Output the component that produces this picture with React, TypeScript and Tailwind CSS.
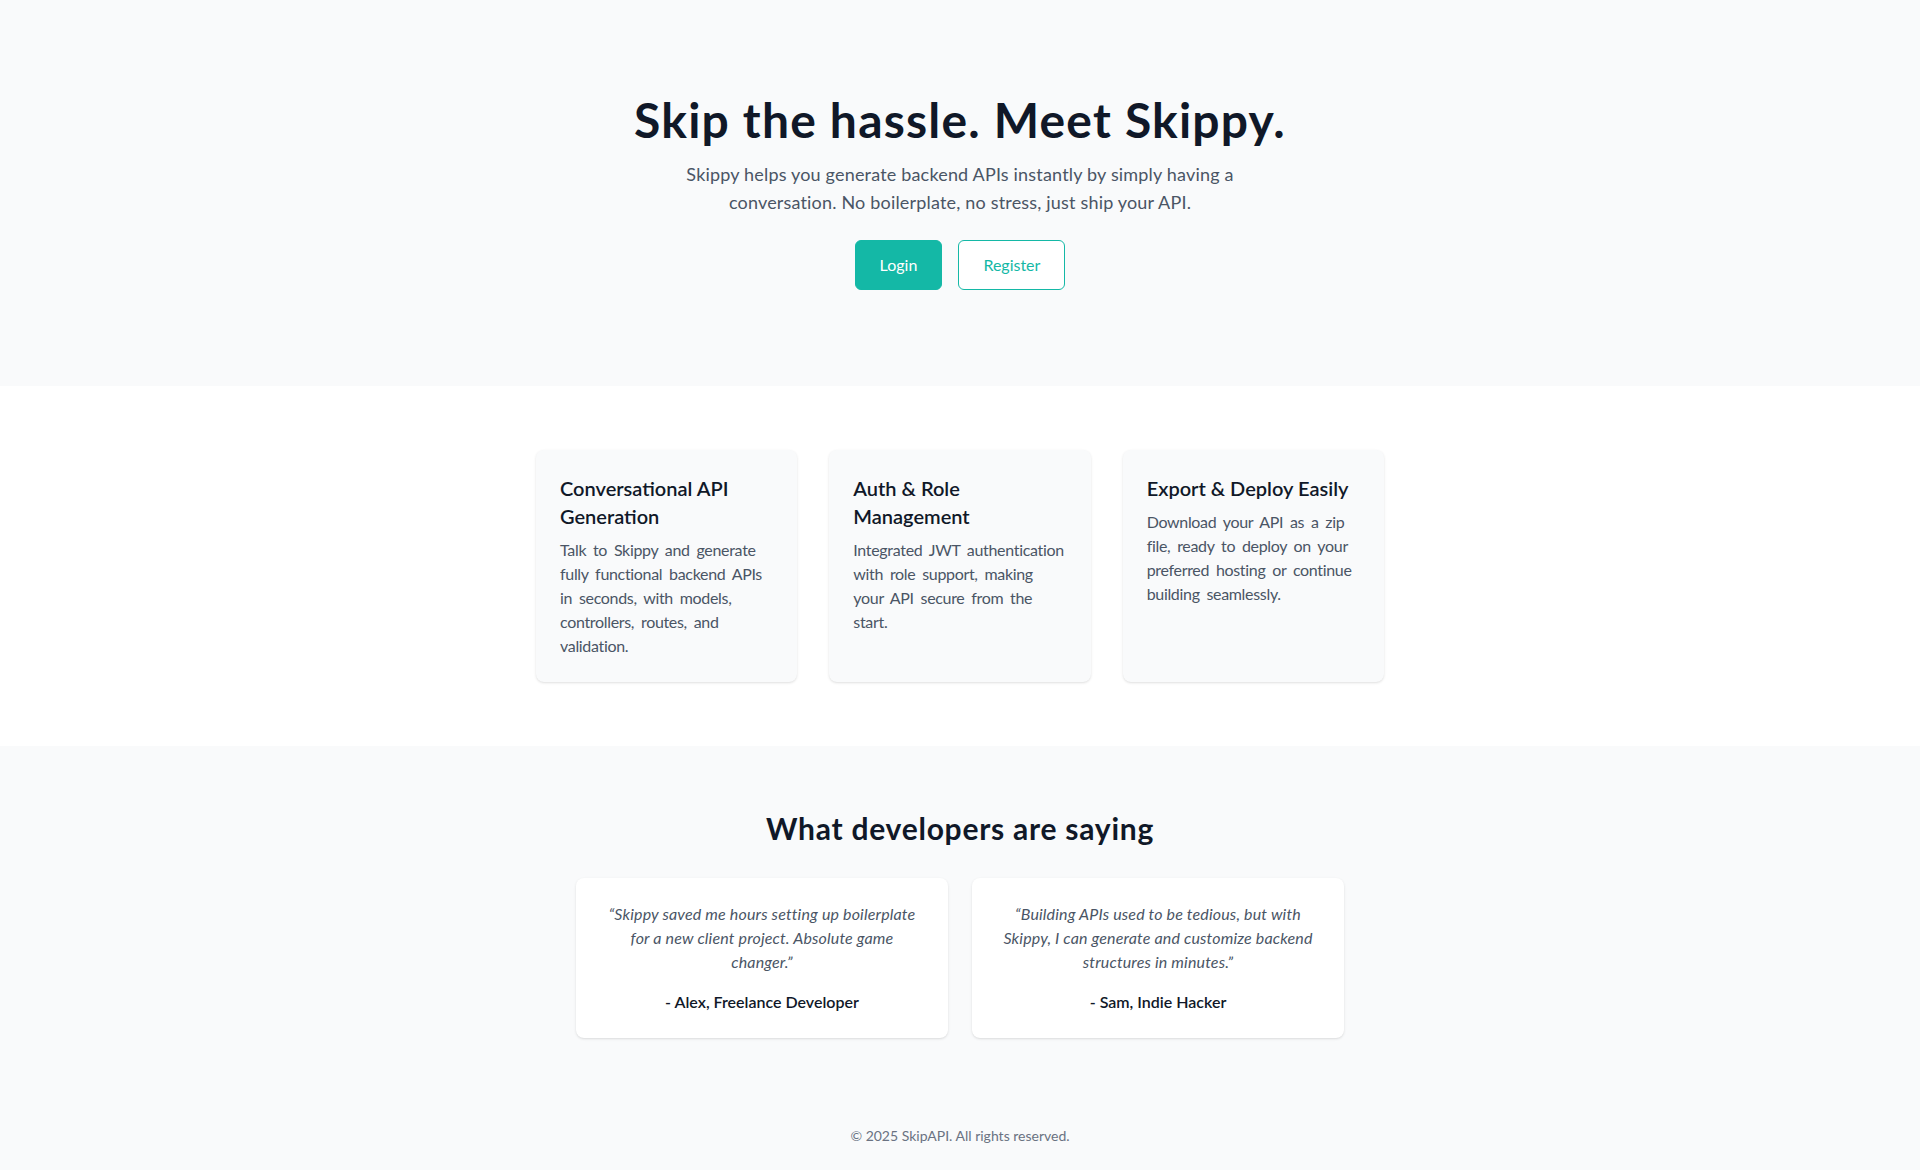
const FEATURES = [
  {
    title: 'Conversational API Generation',
    body: 'Talk to Skippy and generate fully functional backend APIs in seconds, with models, controllers, routes, and validation.',
  },
  {
    title: 'Auth & Role Management',
    body: 'Integrated JWT authentication with role support, making your API secure from the start.',
  },
  {
    title: 'Export & Deploy Easily',
    body: 'Download your API as a zip file, ready to deploy on your preferred hosting or continue building seamlessly.',
  },
];

const TESTIMONIALS = [
  {
    quote: '“Skippy saved me hours setting up boilerplate for a new client project. Absolute game changer.”',
    author: '- Alex, Freelance Developer',
  },
  {
    quote: '“Building APIs used to be tedious, but with Skippy, I can generate and customize backend structures in minutes.”',
    author: '- Sam, Indie Hacker',
  },
];

export default function App() {
  return (
    <div className="min-h-screen bg-gray-50 font-['Segoe_UI','Lato',sans-serif] text-gray-900">
      <section className="bg-gray-50 px-6 py-24 text-center">
        <h1 className="text-5xl font-bold leading-none tracking-wide text-gray-900">Skip the hassle. Meet Skippy.</h1>
        <p className="mx-auto mt-4 max-w-xl text-lg tracking-[0.01em] text-gray-600">
          Skippy helps you generate backend APIs instantly by simply having a conversation. No boilerplate, no
          stress, just ship your API.
        </p>
        <div className="mt-6 flex justify-center gap-4">
          <a
            href="#"
            className="rounded-md border border-[#14b8a6] bg-[#14b8a6] px-6 py-3 text-base text-white transition-colors hover:bg-teal-600"
          >
            Login
          </a>
          <a
            href="#"
            className="rounded-md border border-[#14b8a6] bg-white px-6 py-3 text-base text-[#14b8a6] transition-colors hover:bg-teal-50"
          >
            Register
          </a>
        </div>
      </section>

      <section className="bg-white py-16">
        <div className="mx-auto grid max-w-4xl grid-cols-3 gap-8 px-6">
          {FEATURES.map((f) => (
            <div key={f.title} className="rounded-lg bg-gray-50 p-6 shadow-sm">
              <h3 className="mb-2 text-xl font-semibold text-gray-900">{f.title}</h3>
              <p className="text-base tracking-[-0.02em] text-gray-600 [word-spacing:3px]">{f.body}</p>
            </div>
          ))}
        </div>
      </section>

      <section className="bg-gray-50 py-16">
        <h2 className="mb-8 text-center text-3xl font-bold tracking-wide text-gray-900">What developers are saying</h2>
        <div className="mx-auto grid max-w-3xl grid-cols-2 gap-6">
          {TESTIMONIALS.map((t) => (
            <div key={t.author} className="rounded-lg bg-white p-6 text-center shadow-sm">
              <p className="italic tracking-[0.01em] text-gray-600">{t.quote}</p>
              <p className="mt-4 font-semibold text-gray-900">{t.author}</p>
            </div>
          ))}
        </div>
      </section>

      <footer className="bg-gray-50 py-6 text-center text-sm text-gray-500">
        &copy; 2025 SkipAPI. All rights reserved.
      </footer>
    </div>
  );
}
